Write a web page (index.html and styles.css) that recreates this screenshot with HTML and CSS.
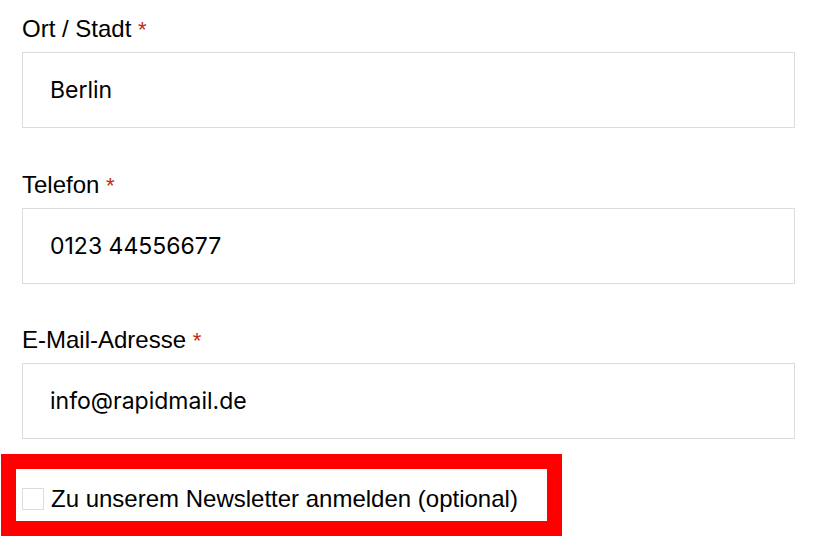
FILE: index.html
```html
<!DOCTYPE html>
<html lang="de">
<head>
  <meta charset="UTF-8" />
  <meta name="viewport" content="width=device-width, initial-scale=1.0" />
  <title>Kontaktformular</title>
  <link rel="stylesheet" href="styles.css">
</head>
<body>

  <form class="form-wrapper" id="signupForm">
    <div class="field">
      <label for="city">Ort / Stadt <span class="required">*</span></label>
      <input type="text" id="city" name="city" value="Berlin" required />
    </div>

    <div class="field">
      <label for="phone">Telefon <span class="required">*</span></label>
      <input type="text" id="phone" name="phone" value="0123 44556677" required />
    </div>

    <div class="field field-last">
      <label for="email">E-Mail-Adresse <span class="required">*</span></label>
      <input type="email" id="email" name="email" value="info@rapidmail.de" required />
    </div>

    <div class="consent">
      <input type="checkbox" id="newsletter" name="newsletter" />
      <label for="newsletter">Zu unserem Newsletter anmelden (optional)</label>
    </div>
  </form>

</body>
</html>
```

FILE: styles.css
```css
body {
  margin: 0;
  padding: 0;
  background: #fff;
  color: #000;
  font-family: "Liberation Sans", Arial, sans-serif;
}
.form-wrapper {
  padding: 14px 0 0 22px;
  width: 773px;
}
.field {
  margin-bottom: 41.5px;
}
.field-last {
  margin-bottom: 15px;
}
.field label {
  display: block;
  height: 29px;
  font-size: 24px;
  line-height: 29px;
  margin-bottom: 9px;
}
.required {
  color: #c02b0a;
  font-size: 22px;
  line-height: 1;
}
.field input {
  display: block;
  box-sizing: border-box;
  width: 100%;
  height: 76px;
  margin: 0;
  padding: 0 27px;
  border: 1px solid #dcdcdc;
  border-radius: 0;
  font-family: Inter, "Liberation Sans", sans-serif;
  font-size: 23px;
  color: #000;
  background: #fff;
  outline: none;
}
.consent {
  display: flex;
  align-items: center;
  gap: 7px;
  width: 525px;
  height: 29px;
  margin-left: -21px;
  padding: 15px 0 8px 6px;
  border: 15px solid #ff0000;
}
.consent input {
  appearance: none;
  -webkit-appearance: none;
  box-sizing: border-box;
  width: 22px;
  height: 22px;
  margin: 0;
  border: 1px solid #dcdcdc;
  background: #fff;
  flex-shrink: 0;
}
.consent label {
  font-size: 24px;
  line-height: 29px;
  white-space: nowrap;
}
```
